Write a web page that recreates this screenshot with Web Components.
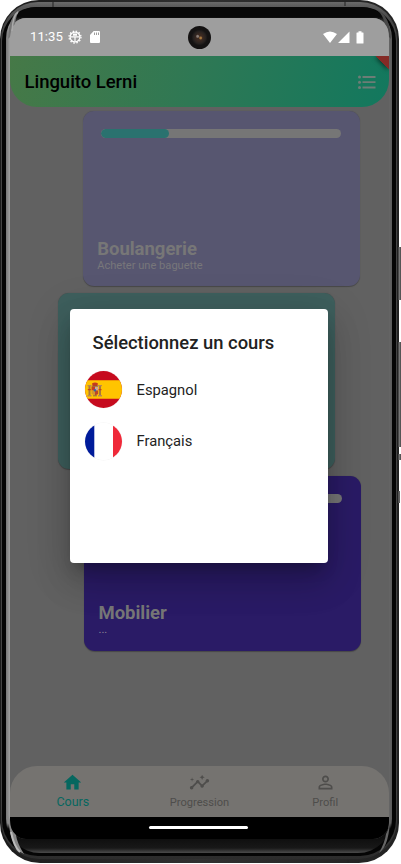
<!DOCTYPE html>
<html lang="fr"><head><meta charset="utf-8"><title>Linguito Lerni</title>
<style>
html,body{margin:0;background:#fff;overflow:hidden}
body{width:401px;height:864px;font-family:Roboto,sans-serif}
</style></head><body>
<phone-frame>
  <status-bar></status-bar>
  <app-header>Linguito Lerni</app-header>
  <course-list>
    <lesson-card style="--x:72.500px;--c:#575670;--p:28.5%;--sub:#77777a" label="Boulangerie">Acheter une baguette</lesson-card>
    <lesson-card style="--x:47.700px;--c:#3e5f5d;--p:0%" label=""></lesson-card>
    <lesson-card style="--x:73.800px;--c:#2a1b66;--p:28%;--h:175px" label="Mobilier">...</lesson-card>
  </course-list>
  <bottom-nav>
    <nav-item class="on" icon="home">Cours</nav-item>
    <nav-item icon="chart">Progression</nav-item>
    <nav-item icon="person">Profil</nav-item>
  </bottom-nav>
  <home-bar></home-bar>
  <course-dialog slot="overlay" heading="Sélectionnez un cours">
    <course-option flag="es">Espagnol</course-option>
    <course-option flag="fr">Français</course-option>
  </course-dialog>
</phone-frame>
<script>
function define(name, render){
  customElements.define(name, class extends HTMLElement{
    constructor(){super();this.attachShadow({mode:'open'});}
    connectedCallback(){this.shadowRoot.innerHTML=render(this);}
  });
}
define('phone-frame',()=>`<style>
:host{display:block;position:relative;width:401px;height:864px}
.body{box-sizing:border-box;width:399px;height:863px;border-radius:39px 39px 40px 40px;padding:2px 2px 4px 1px;
 background:linear-gradient(90deg,#1c1c1c,#303030 50%,#222)}
.rim{box-sizing:border-box;height:857px;border-radius:37px 37px 38px 38px;background:linear-gradient(#6a6a6a 0,#5c5c5c 4px,#444 20px,#444 92%,#2c2c2c 100%);padding:5px 1px 3px 1px}
.black{box-sizing:border-box;height:849px;border-radius:34px 34px 36px 36px;background:#050505;padding:0 4px 0 4px}
.glass{box-sizing:border-box;height:846px;border-radius:31px 31px 34px 34px;padding:11px 3px 0 4px;
 background:linear-gradient(#080808 0 10px,transparent 18px calc(100% - 30px),#060606 calc(100% - 24px),#181818 calc(100% - 5px),#4b4b4b 100%),linear-gradient(90deg,#777 0,#a0a0a0 4px,#686868 7px,#666 calc(100% - 3px),#5a5a5a 100%)}
.screen{box-sizing:border-box;width:379px;height:821px;border-radius:16px;background:#616161;overflow:hidden;display:flex;flex-direction:column}
.btn{position:absolute;left:398px;width:3px;background:linear-gradient(90deg,#333,#777,#444)}
.cam{position:absolute;left:188px;top:26px;width:23px;height:23px;border-radius:50%;background:radial-gradient(circle at 55% 52%,#a5773e 0 .8px,transparent 2px),radial-gradient(circle at 42% 45%,#8d8078 0 .8px,transparent 2px),radial-gradient(circle,#3c2a22 0 3px,#272220 6px,#151313 8px,#100f0f 100%)}
svg.g{position:absolute;left:0;top:0}
</style><div class="body"><div class="rim"><div class="black"><div class="glass"><div class="screen"><slot></slot></div></div></div></div></div>
<svg class="g" width="401" height="864" fill="none">
<path d="M8 39Q9 15 20 10Q16 15 15 24Q11 27 10 37Z" fill="#777"/><path d="M12 31Q13 15 18 12" stroke="#aaa" stroke-width="1.5"/>
<path d="M391 39Q390 15 377 10Q383 15 385 24Q389 28 389 37Z" fill="#484848"/>
<path d="M8 815Q10 849 24 854Q17 843 16 835Q10 830 10 820Z" fill="#888"/><path d="M11 832Q14 847 20 852" stroke="#bbb" stroke-width="2"/>
<path d="M390 815Q390 845 379 853Q385 842 386 834Q389 829 389 822Z" fill="#666"/>
<path d="M53 2V7M345 1V6M43 860V863M348 860V863" stroke="#222"/></svg>
<div class="btn" style="top:247px;height:53px"></div><div class="btn" style="top:342px;height:105px"></div><div class="btn" style="top:454px;height:6px"></div><div class="btn" style="top:491px;height:12px;width:2px"></div>
<div class="cam"></div><slot name="overlay"></slot>`);

define('status-bar',()=>`<style>
:host{display:flex;flex:none;box-sizing:border-box;height:38px;background:#9e9e9e;color:#fff;padding:0 25px 0 20px;align-items:center;font-size:13.200px;line-height:16px}
svg{fill:#fff;display:block}.bug{margin-left:5px}.sd{margin-left:8.500px}.sp{flex:1}
</style><span>11:35</span>
<svg class="bug" width="14" height="14" viewBox="0 0 14 14"><circle cx="7" cy="7" r="4.900" fill="none" stroke="#fff" stroke-width="1.300"/><circle cx="7" cy="7" r="6" fill="none" stroke="#fff" stroke-width="1.300" stroke-dasharray="1.500 1.640"/><path d="M2.500 6.300h9v1.100h-9zM5 3.600h4v2.200H5zM6.400 7h1.200v4.500H6.400z"/></svg>
<svg class="sd" width="10" height="12" viewBox="0 0 10 12"><path fill-rule="evenodd" d="M3.700 0H9a1 1 0 0 1 1 1v10a1 1 0 0 1-1 1H1a1 1 0 0 1-1-1V4zM4 1.500V4h1V1.500zM6 1.500V4h1V1.500zM8 1.500V4h1V1.500z"/></svg>
<span class="sp"></span>
<svg width="41" height="13" viewBox="0 0 41 13"><path d="M0 3Q7-2 14 3L7 12ZM15 12L26.500 .5V12ZM34 1.500h1.500V.3h3v1.200H40q.5 0 .5.500v10q0 .5-.5.500h-6q-.5 0-.5-.5V2q0-.5.5-.5z"/></svg>`);

define('app-header',()=>`<style>
:host{display:flex;flex:none;position:relative;box-sizing:border-box;height:51px;border-radius:0 0 27px 27px;background:linear-gradient(102deg,#467947,#2f7854 48%,#12785e);align-items:center;padding:0 13px 0 14.500px;justify-content:space-between;color:#000;font-size:18.500px;font-weight:500;overflow:hidden}
svg{display:block}.b{position:absolute;right:0;top:0;width:14px;height:14px;background:linear-gradient(45deg,transparent 50%,#842b26 51%);filter:drop-shadow(-1px 1px 2px #0008)}
span{letter-spacing:-.03px}
</style><span><slot></slot></span><svg width="18" height="14" viewBox="0 0 18 14" fill="#6d7d76"><path d="M4.500 1h13v2h-13zM4.500 6.300h13v1.800h-13zM4.500 11.600h13v2h-13z"/><circle cx="1.500" cy="2" r="1.500"/><circle cx="1.500" cy="7.200" r="1.500"/><circle cx="1.500" cy="12.500" r="1.500"/></svg><div class="b"></div>`);

define('course-list',()=>`<style>:host{flex:1;min-height:0;display:flex;flex-direction:column;gap:7px;padding-top:3.500px}</style><slot></slot>`);

define('lesson-card',e=>`<style>
:host{display:flex;flex:none;flex-direction:column;justify-content:space-between;box-sizing:border-box;width:277px;height:var(--h,175.600px);margin-left:var(--x);padding:18px 19px 14.600px 14.700px;border-radius:11px;background:var(--c);box-shadow:0 .5px 1px #0004;color:#777}
.bar{height:9.500px;margin-left:3.600px;border-radius:5px;background:#767676;overflow:hidden}
.bar i{display:block;height:100%;width:var(--p);border-radius:5px;background:#2a726f}
b{display:block;font-size:18.500px;line-height:21px;font-weight:700;letter-spacing:-.02px}
p{margin:0;font-size:11.100px;line-height:12px;color:var(--sub,#8a8895);white-space:nowrap}
</style><div class="bar"><i></i></div><div><b>${e.getAttribute('label')}</b><p><slot></slot></p></div>`);

define('bottom-nav',()=>`<style>:host{display:flex;flex:none;box-sizing:border-box;height:51.500px;padding-right:1px;border-radius:27px 27px 0 0;background:#757370}::slotted(*){flex:1 1 0}</style><slot></slot>`);
const icons={
home:'<path d="M10 20v-6h4v6h5v-8h3L12 3 2 12h3v8z"/>',
chart:'<path d="M21 8c-1.450 0-2.260 1.440-1.930 2.510l-3.550 3.560c-.3-.09-.74-.09-1.040 0l-2.550-2.550C12.270 10.450 11.460 9 10 9c-1.450 0-2.270 1.440-1.930 2.520l-4.560 4.550C2.440 15.740 1 16.550 1 18c0 1.100.9 2 2 2 1.450 0 2.260-1.440 1.930-2.510l4.550-4.560c.3.09.74.09 1.040 0l2.550 2.550C12.730 16.550 13.540 18 15 18c1.450 0 2.270-1.440 1.930-2.520l3.560-3.550c1.070.33 2.510-.48 2.510-1.930 0-1.100-.9-2-2-2zM15 9l.94-2.070L18 6l-2.060-.93L15 3l-.92 2.070L12 6l2.080.93zM3.500 11L4 9l2-.5L4 8l-.5-2L3 8l-2 .5L3 9z"/>',
person:'<path d="M12 5.900a2.100 2.100 0 1 1 0 4.200 2.100 2.100 0 0 1 0-4.200m0 9c2.970 0 6.100 1.460 6.100 2.100v1.100H5.900V17c0-.64 3.130-2.100 6.100-2.100M12 4C9.790 4 8 5.790 8 8s1.790 4 4 4 4-1.790 4-4-1.790-4-4-4zm0 9c-2.670 0-8 1.340-8 4v3h16v-3c0-2.660-5.330-4-8-4z"/>'};
define('nav-item',e=>`<style>
:host{display:flex;flex-direction:column;align-items:center;padding-top:6.500px;color:#4e4d4b;font-size:11.100px;line-height:14px}
:host(.on){color:#06675f;font-size:12.500px;padding-right:1px}
svg{width:21px;height:21px;fill:currentColor;display:block;margin-bottom:2.500px}:host(.on) svg{margin-bottom:1.500px}
</style><svg viewBox="0 0 24 24">${icons[e.getAttribute('icon')]}</svg><span><slot></slot></span>`);

define('home-bar',()=>`<style>:host{display:flex;flex:none;height:22px;background:#000;justify-content:center;align-items:center}i{width:99px;height:3.500px;border-radius:1.500px;background:#fff;margin:-1px 2px 0 0}</style><i></i>`);

define('course-dialog',e=>`<style>
:host{position:absolute;left:70px;top:309px;box-sizing:border-box;width:258px;height:253.500px;background:#fff;border-radius:4px;padding:22px 14.500px;box-shadow:0 10px 14px -6px #0004,0 20px 34px 2px #00000024,0 8px 42px 7px #0000001c;color:#222}
h2{margin:0 0 17px 8px;font-size:18.400px;line-height:23px;font-weight:500;white-space:nowrap}
div{display:flex;flex-direction:column;gap:14.600px}
</style><h2>${e.getAttribute('heading')}</h2><div><slot></slot></div>`);

const flags={
es:`<path fill="#c60b1e" d="M0 0h37v37H0z"/><path fill="#ffc400" d="M0 9.300h37v18.500H0z"/>
<path fill="#a8783c" d="M3.500 15h2v9h-2zM14 15h2v9h-2z"/><path fill="#b98755" d="M2.500 14h4v1.200h-4zM13 14h4v1.200h-4zM2.500 24h4v1.500h-4zM13 24h4v1.500h-4z"/>
<path fill="#c53c23" d="M2.800 18h3v1.300h-3zM13.500 18h3v1.300h-3zM6.500 15.500h3.500v4H6.500z"/><path fill="#c8a7a0" d="M10 15.500h3.200v4H10z"/><path fill="#bd462b" d="M10 19.500h3.200v3.500l-3.200 1.500z"/><path fill="#d4982b" d="M6.500 19.500H10v5L6.500 23z"/><path fill="#c33b20" d="M7 12.500q3-1.800 6 0l-.7 2.500H7.700z"/><circle cx="9.900" cy="19.300" r="1.200" fill="#3964a1"/><path d="M7 15.200h6M8 24.800h4" stroke="#795548" stroke-width=".8"/>`,
fr:`<path fill="#fff" d="M0 0h37v37H0z"/><path fill="#001b9a" d="M0 0h9.300v37H0z"/><path fill="#ef2939" d="M28 0h9v37h-9z"/>`};
define('course-option',e=>`<style>
:host{display:flex;align-items:center;gap:15px;height:37px;font-size:14.750px;color:#222}
svg{width:37px;height:37px;border-radius:50%;flex:none;box-shadow:0 0 0 .5px #0000000d}
</style><svg viewBox="0 0 37 37">${flags[e.getAttribute('flag')]}</svg><span><slot></slot></span>`);
</script></body></html>
